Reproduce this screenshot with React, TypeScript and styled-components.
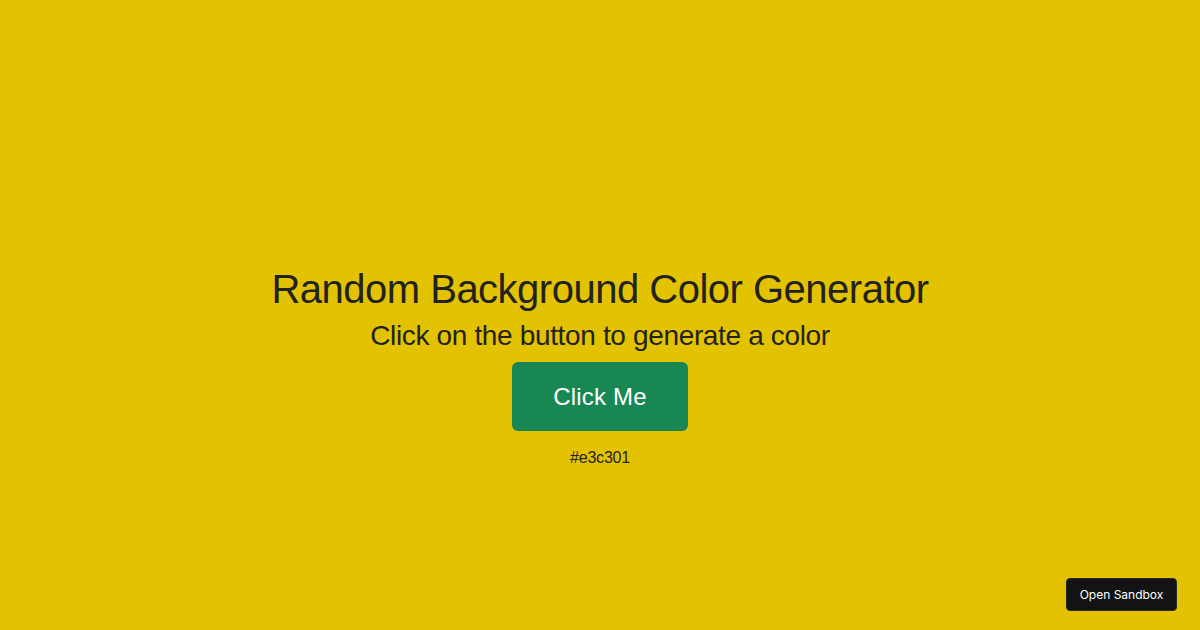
import React, { useState } from "react";
import styled, { createGlobalStyle } from "styled-components";

const Global = createGlobalStyle`
  html, body { margin: 0; padding: 0; }
  body { font-family: "Liberation Sans", Arial, sans-serif; }
`;

const Page = styled.div<{ $bg: string }>`
  width: 1200px;
  height: 630px;
  background: ${(p) => p.$bg};
  position: relative;
  overflow: hidden;
  display: flex;
  flex-direction: column;
  align-items: center;
  padding-top: 266px;
  box-sizing: border-box;
  color: #222222;
`;

const Title = styled.h1`
  margin: 0;
  font-size: 40px;
  line-height: 46px;
  font-weight: 400;
  letter-spacing: -0.5px;
`;

const Subtitle = styled.h2`
  margin: 7px 0 0;
  font-size: 28px;
  line-height: 34px;
  font-weight: 400;
  letter-spacing: -0.35px;
`;

const Button = styled.button`
  margin-top: 9px;
  width: 176px;
  height: 69px;
  border: none;
  border-radius: 6px;
  background: #198754;
  color: #ffffff;
  font-family: "Liberation Sans", Arial, sans-serif;
  font-size: 24px;
  letter-spacing: 0.2px;
  cursor: pointer;
`;

const Hex = styled.p`
  margin: 18px 0 0;
  font-size: 16px;
  line-height: 18px;
  letter-spacing: -0.2px;
`;

const Sandbox = styled.a`
  position: absolute;
  right: 23px;
  bottom: 19px;
  width: 111px;
  height: 33px;
  display: flex;
  align-items: center;
  justify-content: center;
  background: #131313;
  color: #ffffff;
  border: 1px solid #2a2a2a;
  box-sizing: border-box;
  border-radius: 4px;
  font-family: Inter, "Noto Sans", sans-serif;
  font-size: 12px;
  text-decoration: none;
`;

export default function App() {
  const [color, setColor] = useState("#e3c301");
  const gen = () => {
    const c = "#" + Math.floor(Math.random() * 0xffffff).toString(16).padStart(6, "0");
    setColor(c);
  };
  return (
    <>
      <Global />
      <Page $bg={color}>
        <Title>Random Background Color Generator</Title>
        <Subtitle>Click on the button to generate a color</Subtitle>
        <Button onClick={gen}>Click Me</Button>
        <Hex>{color}</Hex>
        <Sandbox href="#">Open Sandbox</Sandbox>
      </Page>
    </>
  );
}
